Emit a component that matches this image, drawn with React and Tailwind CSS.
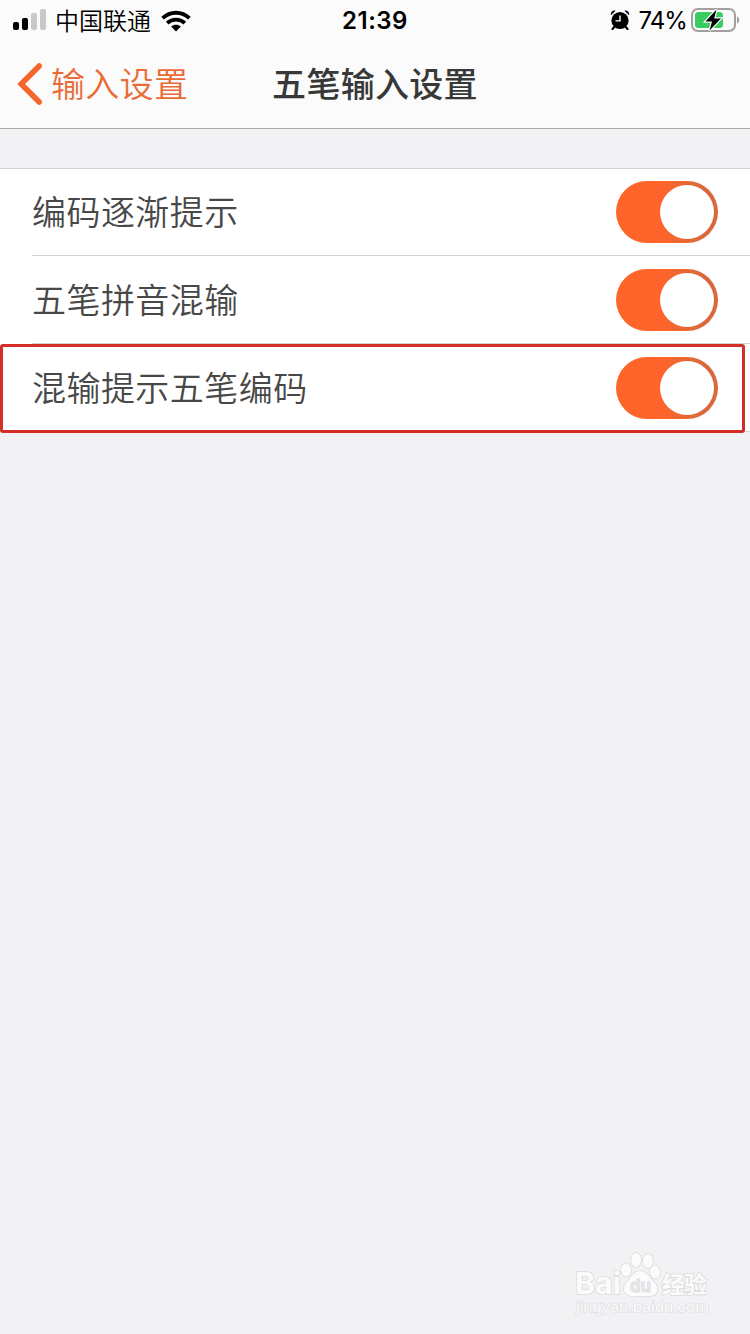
const rows = ["编码逐渐提示", "五笔拼音混输", "混输提示五笔编码"];

function StatusBar() {
  return (
    <div className="grid h-10 grid-cols-3 items-center pl-[13px] pr-[10px] text-black">
      <div className="flex items-center">
        <svg className="-mt-0.5 h-[21px] w-[34px]" viewBox="0 0 34 21">
          <rect x="0" y="13" width="6" height="8" rx="2" />
          <rect x="9" y="9" width="6" height="12" rx="2" />
          <rect x="18" y="4" width="6" height="17" rx="2" fill="#c8c8c8" />
          <rect x="27" y="0" width="6" height="21" rx="2" fill="#c8c8c8" />
        </svg>
        <span className="-mt-px ml-2 text-[24px] font-[350] leading-10">中国联通</span>
        <svg className="ml-[10px] h-[22px] w-[30px]" viewBox="0 0 30 22" fill="none" stroke="#000" strokeWidth="3.8">
          <path d="M1.6 8.2C9.2.9 20.8.9 28.4 8.2" />
          <path d="M6.2 13.1c5-4.7 12.6-4.7 17.6 0" />
          <path d="M15 21.6l-4.9-5c2.8-2.4 7-2.4 9.8 0z" fill="#000" stroke="none" />
        </svg>
      </div>
      <span className="-ml-[3px] pt-px text-center font-['Inter','Liberation_Sans',sans-serif] text-[24px] font-semibold leading-10 tracking-[0.5px]">
        21:39
      </span>
      <div className="flex items-center justify-end pt-px">
        <svg className="-mt-0.5 h-5 w-5" viewBox="0 0 19 20">
          <circle cx="9.5" cy="10.5" r="8.6" />
          <path d="M.5 5.2C-.3 2.5 2.4-.1 5.1.8zM18.5 5.2c.8-2.7-1.9-5.3-4.6-4.4z" />
          <path d="M4.4 16.3L2 19M14.6 16.3L17 19" stroke="#000" strokeWidth="2.2" strokeLinecap="round" />
          <path d="M9.5 5.5v5.4H5" fill="none" stroke="#fff" strokeWidth="1.4" />
        </svg>
        <span className="ml-2 font-['Inter','Liberation_Sans',sans-serif] text-[24px] leading-10 tracking-[-0.9px]">
          74%
        </span>
        <svg className="-mt-0.5 ml-1 h-[26px] w-[49px]" viewBox="0 0 49 26">
          <rect x="1" y="2" width="43" height="22" rx="6" fill="none" stroke="#a0a0a0" strokeWidth="2" />
          <rect x="4" y="5" width="28" height="16" rx="3.5" fill="#39cc61" />
          <path d="M46 9.5c3 1 3 6 0 7z" fill="#a0a0a0" />
          <path d="M25.5 2.5L14.5 14.5H21L18.5 23.5L30 11.5H23.2z" fill="#000" stroke="#fafafa" strokeWidth="2.4" paintOrder="stroke" />
        </svg>
      </div>
    </div>
  );
}

function NavBar() {
  return (
    <div className="grid h-[88px] grid-cols-[1fr_auto_1fr] items-center text-[34px] leading-[50px] tracking-[0.3px]">
      <div className="flex items-center pl-[17px] text-[#e96b36]">
        <svg className="h-[42px] w-[26px]" viewBox="0 0 26 42" fill="none" stroke="#f4672f" strokeWidth="5.6" strokeLinecap="round" strokeLinejoin="miter">
          <path d="M22.2 3L4.2 21l18 18" />
        </svg>
        <span className="-mt-0.5 ml-2 font-[350]">输入设置</span>
      </div>
      <h1 className="-mt-0.5 font-medium text-[#383838]">五笔输入设置</h1>
    </div>
  );
}

function Toggle() {
  return (
    <button
      type="button"
      role="switch"
      aria-checked="true"
      className="flex h-[62px] w-[102px] items-center justify-end rounded-full bg-linear-to-r from-[#ff642b] from-45% to-[#d9693b] to-85% pr-1"
    >
      <span className="size-[54px] rounded-full bg-white" />
    </button>
  );
}

function Watermark() {
  return (
    <svg className="absolute bottom-4 right-9 h-[68px] w-[142px]" viewBox="0 0 142 68" fill="#fbfbfc" stroke="#dcdcdf" strokeWidth="1.6" paintOrder="stroke">
      <text x="3" y="44" fontSize="30" className="font-['Inter','Liberation_Sans',sans-serif] font-bold" textLength="46" lengthAdjust="spacingAndGlyphs">Bai</text>
      <ellipse cx="54" cy="20" rx="5" ry="6.5" />
      <ellipse cx="64" cy="10" rx="5" ry="7" />
      <ellipse cx="76" cy="11" rx="5" ry="7" />
      <ellipse cx="83" cy="22" rx="5" ry="6.5" />
      <path d="M68 21c-7 0-9 7-13 11-6 6-3 14 6 14h16c9 0 11-8 5-14-4-4-7-11-14-11z" />
      <text x="58" y="42" fontSize="18" fill="#e4e4e7" strokeWidth="1" className="font-['Inter','Liberation_Sans',sans-serif] font-bold" textLength="21" lengthAdjust="spacingAndGlyphs">du</text>
      <text x="90" y="43" fontSize="23" className="font-bold" textLength="45">经验</text>
      <text x="4" y="62" fontSize="15" strokeWidth="1.2" className="font-['Liberation_Sans',sans-serif]" textLength="133" lengthAdjust="spacingAndGlyphs">jingyan.baidu.com</text>
    </svg>
  );
}

export default function App() {
  return (
    <div className="relative flex h-[1334px] w-[750px] flex-col overflow-hidden bg-[#f2f2f5] font-['Noto_Sans_CJK_SC',sans-serif]">
      <header className="h-[129px] border-b border-[#aaaaab] bg-[#fbfbfb]">
        <StatusBar />
        <NavBar />
      </header>
      <main className="relative mt-[39px] bg-white">
        <ul className="border-y border-[#d3d3d6] pl-8">
          {rows.map((label, i) => (
            <li
              key={label}
              className={
                i < rows.length - 1
                  ? "flex h-[88px] items-center justify-between border-b border-[#d3d3d6] pr-8 first:h-[87px]"
                  : "flex h-[87px] items-center justify-between pr-8"
              }
            >
              <span className="-mt-0.5 text-[34px] font-[350] leading-[50px] tracking-[0.45px] text-[#484848]">{label}</span>
              <Toggle />
            </li>
          ))}
        </ul>
        {/* highlighted row */}
        <div className="absolute left-0 top-[176px] h-[89px] w-[745px] rounded-[3px] border-3 border-[#d32f28]" />
      </main>
      <Watermark />
    </div>
  );
}
